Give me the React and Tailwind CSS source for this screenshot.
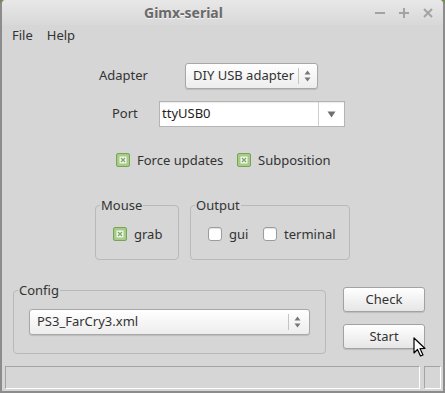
import React from "react";

const FONT = { fontFamily: '"Noto Sans", "Open Sans", sans-serif' };

function Check({ checked }) {
  if (checked) {
    return (
      <span className="flex h-[14px] w-[14px] shrink-0 items-center justify-center rounded-[2px] border border-[#79a25b] bg-[#a6cd88]">
        <svg width="8" height="8" viewBox="0 0 8 8">
          <rect x="0.5" y="0.5" width="7" height="7" fill="#f4f8f0" />
          <path d="M2 2 L6 6 M6 2 L2 6" stroke="#7ea563" strokeWidth="1.3" />
        </svg>
      </span>
    );
  }
  return (
    <span className="h-[14px] w-[14px] shrink-0 rounded-[3px] border border-[#9c9c9c] bg-white shadow-[inset_0_1px_1px_rgba(0,0,0,0.12)]" />
  );
}

function Item({ checked, label, className = "" }) {
  return (
    <div className={"flex items-center " + className}>
      <Check checked={checked} />
      <span className="ml-[7px] text-[13px] leading-none text-[#333]">{label}</span>
    </div>
  );
}

function Spinner() {
  return (
    <div className="flex h-[16px] items-center">
      <span className="h-[16px] w-px bg-[#c4c4c4]" />
      <svg className="ml-[5px]" width="7" height="12" viewBox="0 0 7 12">
        <path d="M3.5 0.5 L6.5 4.5 L0.5 4.5 Z" fill="#777" />
        <path d="M0.5 7.5 L6.5 7.5 L3.5 11.5 Z" fill="#777" />
      </svg>
    </div>
  );
}

function Group({ title, className = "", children }) {
  return (
    <div className={"relative rounded-[4px] border border-[#b9b9b9] " + className}>
      <span className="absolute left-[4px] top-[-7px] bg-[#d6d6d6] px-px text-[13px] leading-[13px] text-[#333]">
        {title}
      </span>
      {children}
    </div>
  );
}

function Button({ label, className = "" }) {
  return (
    <div
      className={
        "flex h-[25px] w-[82px] items-center justify-center rounded-[3px] border border-[#a2a2a2] bg-gradient-to-b from-white to-[#e6e6e6] text-[13px] text-[#333] shadow-[0_1px_1px_rgba(0,0,0,0.12)] " +
        className
      }
    >
      {label}
    </div>
  );
}

export default function App() {
  return (
    <div className="h-[393px] w-[445px] bg-[#6f8d52]" style={FONT}>
      <div className="relative flex h-[393px] w-[445px] flex-col rounded-t-[5px] border-x-2 border-b-2 border-[#8c8c8c] bg-[#d6d6d6]">
        {/* title bar */}
        <div className="flex h-[25px] items-center rounded-t-[4px] bg-gradient-to-b from-[#e8e8e8] to-[#d8d8d8]">
          <span className="ml-[142px] text-[14px] font-bold text-[#6a6a6a] [text-shadow:0_1px_0_#f4f4f4]">
            Gimx-serial
          </span>
          <div className="ml-auto mr-[10px] flex items-center gap-[14px]">
            <svg width="10" height="10" viewBox="0 0 10 10">
              <rect x="0" y="4" width="10" height="2" fill="#a3a3a3" />
            </svg>
            <svg width="10" height="10" viewBox="0 0 10 10">
              <rect x="0" y="4" width="10" height="2" fill="#a3a3a3" />
              <rect x="4" y="0" width="2" height="10" fill="#a3a3a3" />
            </svg>
            <svg width="10" height="10" viewBox="0 0 10 10">
              <path d="M1 1 L9 9 M9 1 L1 9" stroke="#a3a3a3" strokeWidth="2" />
            </svg>
          </div>
        </div>

        {/* menu */}
        <div className="flex h-[22px] items-center gap-[14px] pl-[10px] text-[13px] text-[#333]">
          <span>File</span>
          <span>Help</span>
        </div>

        {/* adapter */}
        <div className="mt-[16px] flex h-[26px] items-center">
          <span className="ml-[97px] w-[86px] text-[13px] text-[#333]">Adapter</span>
          <div className="flex h-[26px] w-[133px] items-center rounded-[3px] border border-[#a8a8a8] bg-gradient-to-b from-white to-[#ededed] pl-[7px] pr-[6px] text-[13px] text-[#333] shadow-[0_1px_1px_rgba(0,0,0,0.12)]">
            <span>DIY USB adapter</span>
            <div className="ml-auto">
              <Spinner />
            </div>
          </div>
        </div>

        {/* port */}
        <div className="mt-[12px] flex h-[26px] items-center">
          <span className="ml-[110px] w-[47px] text-[13px] text-[#333]">Port</span>
          <div className="flex h-[26px] w-[186px] items-center border border-[#b4b4b4] bg-white pl-[2px] text-[13px] text-[#222] shadow-[inset_0_1px_1px_rgba(0,0,0,0.08)]">
            <span>ttyUSB0</span>
            <span className="ml-auto h-[24px] w-px bg-[#cfcfcf]" />
            <svg className="mx-[8px]" width="9" height="7" viewBox="0 0 9 7">
              <path d="M0.5 0.5 L8.5 0.5 L4.5 6.5 Z" fill="#707070" />
            </svg>
          </div>
        </div>

        {/* options */}
        <div className="mt-[26px] flex h-[14px] items-center">
          <Item checked label="Force updates" className="ml-[114px] w-[121px]" />
          <Item checked label="Subposition" />
        </div>

        {/* mouse / output */}
        <div className="mt-[38px] flex">
          <Group title="Mouse" className="ml-[93px] h-[55px] w-[84px] pl-[17px] pt-[21px]">
            <Item checked label="grab" />
          </Group>
          <Group title="Output" className="ml-[11px] h-[55px] w-[160px] pl-[17px] pt-[21px]">
            <div className="flex">
              <Item label="gui" className="w-[55px]" />
              <Item label="terminal" />
            </div>
          </Group>
        </div>

        {/* config + buttons */}
        <div className="mt-[30px] flex">
          <Group title="Config" className="ml-[11px] h-[64px] w-[313px] pl-[15px] pt-[18px]">
            <div className="flex h-[26px] w-[281px] items-center rounded-[3px] border border-[#a8a8a8] bg-gradient-to-b from-white to-[#ededed] pl-[7px] pr-[8px] text-[13px] text-[#333] shadow-[0_1px_1px_rgba(0,0,0,0.12)]">
              <span>PS3_FarCry3.xml</span>
              <div className="ml-auto">
                <Spinner />
              </div>
            </div>
          </Group>
          <div className="ml-[17px] flex flex-col">
            <Button label="Check" className="-mt-[3px]" />
            <Button label="Start" className="mt-[12px]" />
          </div>
        </div>

        {/* status bar */}
        <div className="mb-[2px] mt-auto flex h-[23px] gap-[4px] pl-[3px]">
          <div className="w-[415px] border border-[#a4a4a4] border-b-white border-r-white" />
          <div className="w-[17px] border border-[#a4a4a4] border-b-white border-r-white" />
        </div>

        {/* mouse pointer */}
        <svg className="absolute left-[411px] top-[337px]" width="14" height="21" viewBox="0 0 14 21">
          <path
            d="M1 1 L1 16 L4.5 12.5 L7.5 19 L10 18 L7 11.5 L12 11.5 Z"
            fill="#fff"
            stroke="#000"
            strokeWidth="1.2"
            strokeLinejoin="round"
          />
        </svg>
      </div>
    </div>
  );
}
